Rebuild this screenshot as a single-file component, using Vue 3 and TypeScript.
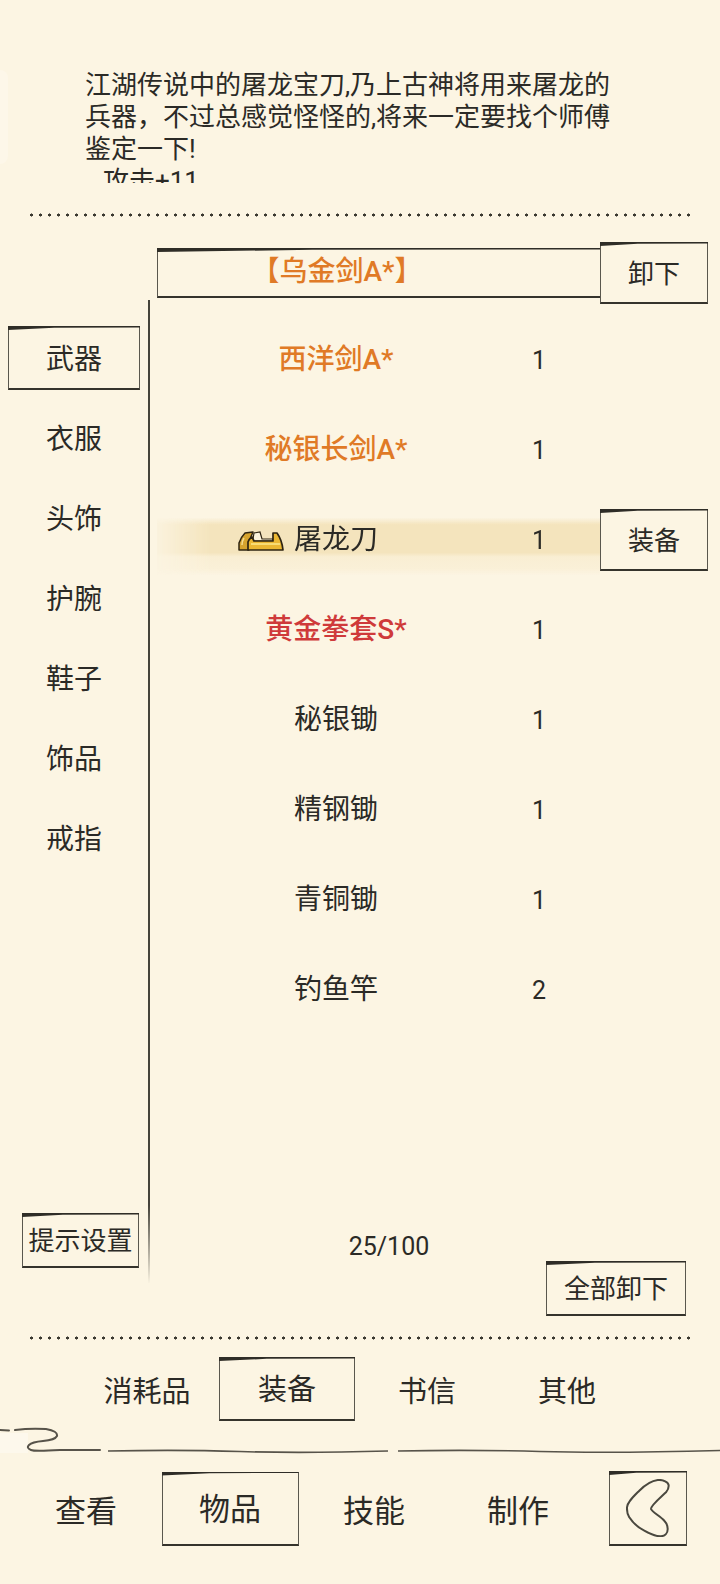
<script setup lang="ts">
interface Item {
  name: string
  count: number
  tone?: 'orange' | 'red'
  selected?: boolean
}

const descLines: string[] = [
  '江湖传说中的屠龙宝刀,乃上古神将用来屠龙的',
  '兵器，不过总感觉怪怪的,将来一定要找个师傅',
  '鉴定一下!',
]

const categories: string[] = ['武器', '衣服', '头饰', '护腕', '鞋子', '饰品', '戒指']

const items: Item[] = [
  { name: '西洋剑A*', count: 1, tone: 'orange' },
  { name: '秘银长剑A*', count: 1, tone: 'orange' },
  { name: '屠龙刀', count: 1, selected: true },
  { name: '黄金拳套S*', count: 1, tone: 'red' },
  { name: '秘银锄', count: 1 },
  { name: '精钢锄', count: 1 },
  { name: '青铜锄', count: 1 },
  { name: '钓鱼竿', count: 2 },
]

const kinds: string[] = ['消耗品', '装备', '书信', '其他']
const navs: string[] = ['查看', '物品', '技能', '制作']
</script>

<template>
  <div class="page">
    <div class="ghost"></div>

    <div class="desc">
      <p v-for="line in descLines" :key="line">{{ line }}</p>
      <p class="stat">攻击+11</p>
    </div>

    <div class="dots"></div>

    <div class="equipped">
      <div class="sketch equipped_bar">【乌金剑A*】</div>
      <div class="sketch action">卸下</div>
    </div>

    <div class="body">
      <div class="side">
        <div class="cats">
          <div v-for="(cat, i) in categories" :key="cat" class="cat" :class="{ sketch: i === 0 }">{{ cat }}</div>
        </div>
        <div class="sketch tip">提示设置</div>
      </div>

      <div class="list">
        <div class="rows">
          <div v-for="item in items" :key="item.name" class="row">
            <div class="row_main" :class="{ selected: item.selected }">
              <div class="row_name" :class="item.tone">
                <svg v-if="item.selected" class="bag" viewBox="0 0 46 21">
                  <path d="M1 20 L1 13 Q3 7 7 3 L15 2 L12 9 L11 20 Z" fill="#d6a32e" stroke="#2e2412" stroke-width="1.500" stroke-linejoin="round" />
                  <path d="M6 8 Q4 11 4 15" fill="none" stroke="#f4dc92" stroke-width="1.500" />
                  <path d="M15 9 L16 3 L22 2 L24 9 L35 9 L35 11 L15 11 Z" fill="#fbf3dc" stroke="#2e2412" stroke-width="1.200" />
                  <path d="M10 20 L10 12 Q11 9 14 7 L16 11 L35 11 L35 3 L39 3 Q44 10 45 20 Z" fill="#ebb733" stroke="#2e2412" stroke-width="1.700" stroke-linejoin="round" />
                  <path d="M13 14 L42 14" stroke="#f8dc74" stroke-width="2" />
                </svg>
                <span>{{ item.name }}</span>
              </div>
              <div class="row_count">{{ item.count }}</div>
            </div>
            <div v-if="item.selected" class="sketch action">装备</div>
          </div>
        </div>
        <div class="capacity">25/100</div>
        <div class="sketch all">全部卸下</div>
      </div>
    </div>

    <div class="dots dots_low"></div>

    <div class="kinds">
      <div v-for="(kind, i) in kinds" :key="kind" class="kind">
        <div :class="{ 'sketch kind_on': i === 1 }">{{ kind }}</div>
      </div>
    </div>

    <svg class="rule" viewBox="0 0 720 30">
      <rect x="0" y="6" width="28" height="20" fill="#fdf8ec" />
      <path d="M0 3 L9 3.500 M15 3 Q30 1 46 2 Q58 4 57 9 Q55 13 43 14 Q32 15 29 18 Q26 21 31 23 Q34 24.500 60 23 L100 23" fill="none" stroke="#57534a" stroke-width="2" stroke-linecap="round" />
      <path d="M108 24 Q180 22.500 240 24.500 T388 24 M398 24 Q470 22.500 540 24.500 T720 23.500" fill="none" stroke="#57534a" stroke-width="1.600" />
    </svg>

    <div class="navs">
      <div v-for="(nav, i) in navs" :key="nav" class="nav">
        <div :class="{ 'sketch nav_on': i === 1 }">{{ nav }}</div>
      </div>
      <div class="sketch nav_icon">
        <svg viewBox="0 0 44 58">
          <path d="M31.700 1 C24 2 18 7 13.300 11.700 C7 18 1.500 23 1 28.300 C0.800 33 1.500 36 3.300 38.300 C7 44 13 49 18.300 51.700 C24 55 30 57.500 35 57.300 C39 57 41.700 54 41.700 50 C41.700 47 40.500 44 38.300 41.700 C34 37 26 33 25 30 C24.500 27 34 19 40 13.300 C42 11 42.700 9 42.700 6.700 C42.700 3 37 0.500 31.700 1 Z" fill="none" stroke="#4a483f" stroke-width="2" />
        </svg>
      </div>
    </div>
  </div>
</template>

<style>
html,
body {
  background: #fcf5e3;
}
</style>

<style scoped>
.page {
  position: relative;
  width: 720px;
  height: 1584px;
  overflow: hidden;
  background: #fcf5e3;
  color: #2b2a26;
  font-family: Roboto, "Noto Sans CJK SC", sans-serif;
}

p {
  margin: 0;
}

.ghost {
  position: absolute;
  top: 70px;
  left: -12px;
  width: 20px;
  height: 94px;
  border-radius: 8px;
  background: #fdf7e9;
}

.sketch {
  position: relative;
  box-sizing: border-box;
  padding-bottom: 3px;
  border: 1px solid #5a574e;
  border-bottom: 2px solid #35332c;
}

.sketch::before {
  content: "";
  position: absolute;
  top: -1px;
  left: -1px;
  right: -1px;
  height: 4px;
  background: #2f2d27;
  clip-path: polygon(0 0, 100% 0, 100% 35%, 35% 45%, 0 100%);
}

.desc {
  position: relative;
  height: 114px;
  padding: 69px 0 0 85px;
  overflow: hidden;
  font-size: 26px;
  line-height: 32px;
  white-space: nowrap;
}

.stat {
  padding-left: 18px;
}

.dots {
  width: 662px;
  height: 4px;
  margin: 30px 0 0 30px;
  background: radial-gradient(circle, #3a382f 1.300px, transparent 1.800px) -3px 0 / 9px 4px repeat-x;
}

.equipped {
  display: flex;
  align-items: center;
  height: 62px;
  margin: 25px 0 0 157px;
}

.equipped_bar {
  width: 443px;
  height: 50px;
  padding: 0 84px 0 0;
  border-right: none;
  color: #e07a26;
  font-size: 28px;
  font-weight: 500;
  line-height: 46px;
  text-align: center;
}

.action {
  display: flex;
  flex: none;
  align-items: center;
  justify-content: center;
  width: 108px;
  height: 62px;
  font-size: 26px;
}

.body {
  display: flex;
  height: 1016px;
  margin-top: -4px;
}

.side {
  display: flex;
  flex-direction: column;
  justify-content: space-between;
  box-sizing: border-box;
  width: 150px;
  height: 983px;
  padding: 26px 0 15px 8px;
  border-right: 2px solid;
  border-image: linear-gradient(#45433a 92%, rgba(69, 67, 58, 0)) 1;
}

.cats {
  display: flex;
  flex-direction: column;
}

.cat {
  display: flex;
  align-items: center;
  justify-content: center;
  box-sizing: border-box;
  width: 132px;
  height: 64px;
  margin-bottom: 16px;
  padding-bottom: 2px;
  font-size: 28px;
}

.tip {
  display: flex;
  align-items: center;
  justify-content: center;
  width: 117px;
  height: 55px;
  margin-left: 14px;
  font-size: 26px;
}

.list {
  display: flex;
  flex-direction: column;
  padding: 15px 0 0 7px;
}

.rows {
  height: 932px;
}

.row {
  display: flex;
  align-items: center;
  height: 90px;
}

.row_main {
  display: grid;
  grid-template-columns: 358px 48px;
  align-items: center;
  width: 443px;
  height: 70px;
}

.selected {
  background: linear-gradient(rgba(244, 228, 189, 0) 18%, #f4e4bd 28%, #f4e4bd 68%, #f9eed3 74%, #faf0d8 92%, rgba(250, 240, 216, 0) 100%);
  -webkit-mask-image: linear-gradient(90deg, rgba(0, 0, 0, 0.15) 0, #000 12%);
  mask-image: linear-gradient(90deg, rgba(0, 0, 0, 0.15) 0, #000 12%);
}

.row_name {
  display: flex;
  align-items: center;
  justify-content: center;
  font-size: 28px;
  line-height: 40px;
  white-space: nowrap;
}

.row_count {
  font-size: 25px;
  text-align: center;
}

.orange {
  color: #e07a26;
  font-weight: 500;
}

.red {
  color: #cf3a3a;
  font-weight: 500;
}

.bag {
  width: 46px;
  height: 21px;
  margin: 0 10px 0 -56px;
}

.capacity {
  width: 464px;
  margin-top: -16px;
  font-size: 25px;
  line-height: 32px;
  text-align: center;
}

.all {
  display: flex;
  align-items: center;
  justify-content: center;
  width: 140px;
  height: 55px;
  margin: -2px 0 0 389px;
  font-size: 26px;
}

.dots_low {
  margin-top: 20px;
}

.kinds {
  display: grid;
  grid-template-columns: repeat(4, 140px);
  align-items: center;
  height: 64px;
  margin-top: 17px;
  padding-left: 77px;
  font-size: 29px;
  text-align: center;
}

.kind_on {
  display: flex;
  align-items: center;
  justify-content: center;
  width: 136px;
  height: 64px;
  margin: 0 auto;
}

.rule {
  display: block;
  width: 720px;
  height: 30px;
  margin-top: 6px;
}

.navs {
  display: grid;
  grid-template-columns: repeat(4, 144px) 97px;
  align-items: center;
  height: 75px;
  margin-top: 14px;
  padding-left: 14px;
  font-size: 31px;
  text-align: center;
}

.nav_on {
  display: flex;
  align-items: center;
  justify-content: center;
  width: 137px;
  height: 74px;
  margin: 0 auto;
}

.nav_icon {
  display: flex;
  align-items: center;
  justify-content: center;
  height: 75px;
  margin-left: 19px;
  padding-bottom: 0;
}

.nav_icon svg {
  width: 44px;
  height: 58px;
}
</style>
